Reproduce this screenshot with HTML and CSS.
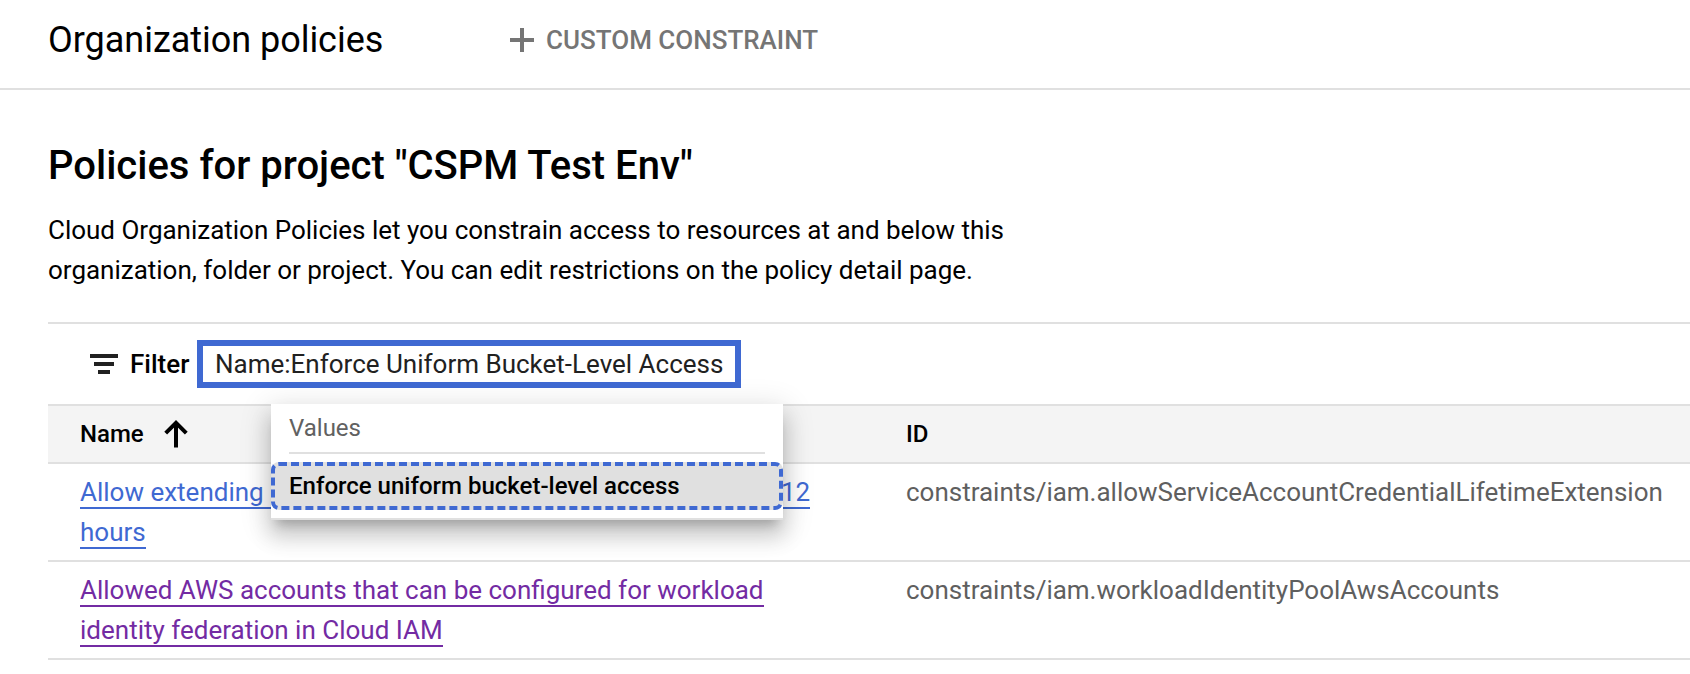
FILE: index.html
```html
<!DOCTYPE html>
<html lang="en">
<head>
<meta charset="utf-8">
<title>Organization policies</title>
<link rel="stylesheet" href="styles.css">
</head>
<body>
<header class="topbar">
  <h1 class="topbar-title">Organization policies</h1>
  <button class="action" type="button">
    <svg class="action-icon" width="24" height="24" viewBox="0 0 24 24"><path d="M10 0h4v10h10v4H14v10h-4V14H0v-4h10z" fill="currentColor"/></svg>
    <span>CUSTOM CONSTRAINT</span>
  </button>
</header>
<main class="content">
  <h2 class="heading">Policies for project "CSPM Test Env"</h2>
  <p class="description">Cloud Organization Policies let you constrain access to resources at and below this<br>organization, folder or project. You can edit restrictions on the policy detail page.</p>
  <section class="table">
    <div class="filter">
      <svg class="filter-icon" width="28" height="20" viewBox="0 0 28 20"><path d="M0 0h28v4H0zM4 8h20v4H4zM8 16h12v4H8z" fill="#212121"/></svg>
      <span class="filter-label">Filter</span>
      <div class="filter-input">Name:Enforce Uniform Bucket-Level Access</div>
      <div class="menu">
        <div class="menu-title">Values</div>
        <div class="menu-item">Enforce uniform bucket-level access</div>
      </div>
    </div>
    <div class="row head">
      <div class="cell-name">
        <span>Name</span>
        <svg class="sort" width="24" height="28" viewBox="0 0 24 28"><path d="M12 27.500V3M1.700 13.200L12 2.900l10.300 10.300" fill="none" stroke="#000" stroke-width="4"/></svg>
      </div>
      <div class="cell-id">ID</div>
    </div>
    <div class="row">
      <div class="cell-name"><a class="link">Allow extending lifetime of OAuth 2.0 access tokens to up to 12<br>hours</a></div>
      <div class="cell-id">constraints/iam.allowServiceAccountCredentialLifetimeExtension</div>
    </div>
    <div class="row">
      <div class="cell-name"><a class="link visited">Allowed AWS accounts that can be configured for workload<br>identity federation in Cloud IAM</a></div>
      <div class="cell-id">constraints/iam.workloadIdentityPoolAwsAccounts</div>
    </div>
  </section>
</main>
</body>
</html>
```
FILE: styles.css
```css
* { box-sizing: border-box; }
body {
  margin: 0;
  height: 674px;
  overflow: hidden;
  background: #fff;
  color: #000;
  font: 26px/40px Roboto, sans-serif;
}
.topbar {
  display: flex;
  align-items: center;
  height: 90px;
  padding: 0 48px 8px;
  border-bottom: 2px solid #e0e0e0;
}
.topbar-title {
  width: 462px;
  margin: 0;
  font-size: 36px;
  font-weight: 400;
  letter-spacing: -.03px;
  white-space: nowrap;
}
.action {
  display: flex;
  align-items: center;
  gap: 12px;
  padding: 0;
  border: 0;
  background: none;
  color: #757575;
  font: 500 26px/40px Roboto, sans-serif;
  white-space: nowrap;
}
.content { padding: 52px 0 0 48px; }
.heading {
  margin: 0;
  font-size: 40px;
  line-height: 48px;
  font-weight: 500;
}
.description {
  margin: 20px 0 32px;
  letter-spacing: -.01px;
  white-space: nowrap;
}
.table { border-top: 2px solid #e0e0e0; }
.filter {
  position: relative;
  display: flex;
  align-items: center;
  height: 82px;
  padding-left: 42px;
  border-bottom: 2px solid #e0e0e0;
}
.filter-label {
  width: 67px;
  margin-left: 12px;
  font-weight: 500;
}
.filter-input {
  width: 544px;
  height: 48px;
  padding-left: 12px;
  border: 6px solid #3f69d2;
  color: #212121;
  line-height: 36px;
  white-space: nowrap;
}
.menu {
  position: absolute;
  z-index: 1;
  top: 80px;
  left: 223px;
  width: 512px;
  height: 116px;
  border-bottom: 2px solid #e0e0e0;
  background: #fff;
  font-size: 24px;
  box-shadow:
    0 10px 10px -6px rgba(0, 0, 0, .2),
    0 16px 20px 2px rgba(0, 0, 0, .14),
    0 6px 28px 4px rgba(0, 0, 0, .12);
}
.menu-title {
  height: 50px;
  margin: 0 18px 8px;
  padding-top: 4px;
  border-bottom: 2px solid #e0e0e0;
  color: #616161;
}
.menu-item {
  height: 48px;
  padding-left: 14px;
  border: 4px dashed #3f69d2;
  border-radius: 8px;
  background: #e0e0e0;
  font-weight: 500;
  line-height: 40px;
}
.row {
  display: grid;
  grid-template-columns: 826px 1fr;
  height: 98px;
  padding: 8px 0 8px 32px;
  border-bottom: 2px solid #e0e0e0;
  white-space: nowrap;
}
.head {
  height: 58px;
  background: #f4f4f4;
  font-size: 24px;
  font-weight: 500;
}
.head .cell-name {
  display: flex;
  align-items: center;
  gap: 20px;
}
.cell-id { color: #5f5f5f; letter-spacing: -.01px; }
.head .cell-id { color: #000; }
.link {
  border-bottom: 2px solid #3f69d2;
  color: #3f69d2;
}
.visited {
  border-color: #732ba3;
  color: #732ba3;
}
```
